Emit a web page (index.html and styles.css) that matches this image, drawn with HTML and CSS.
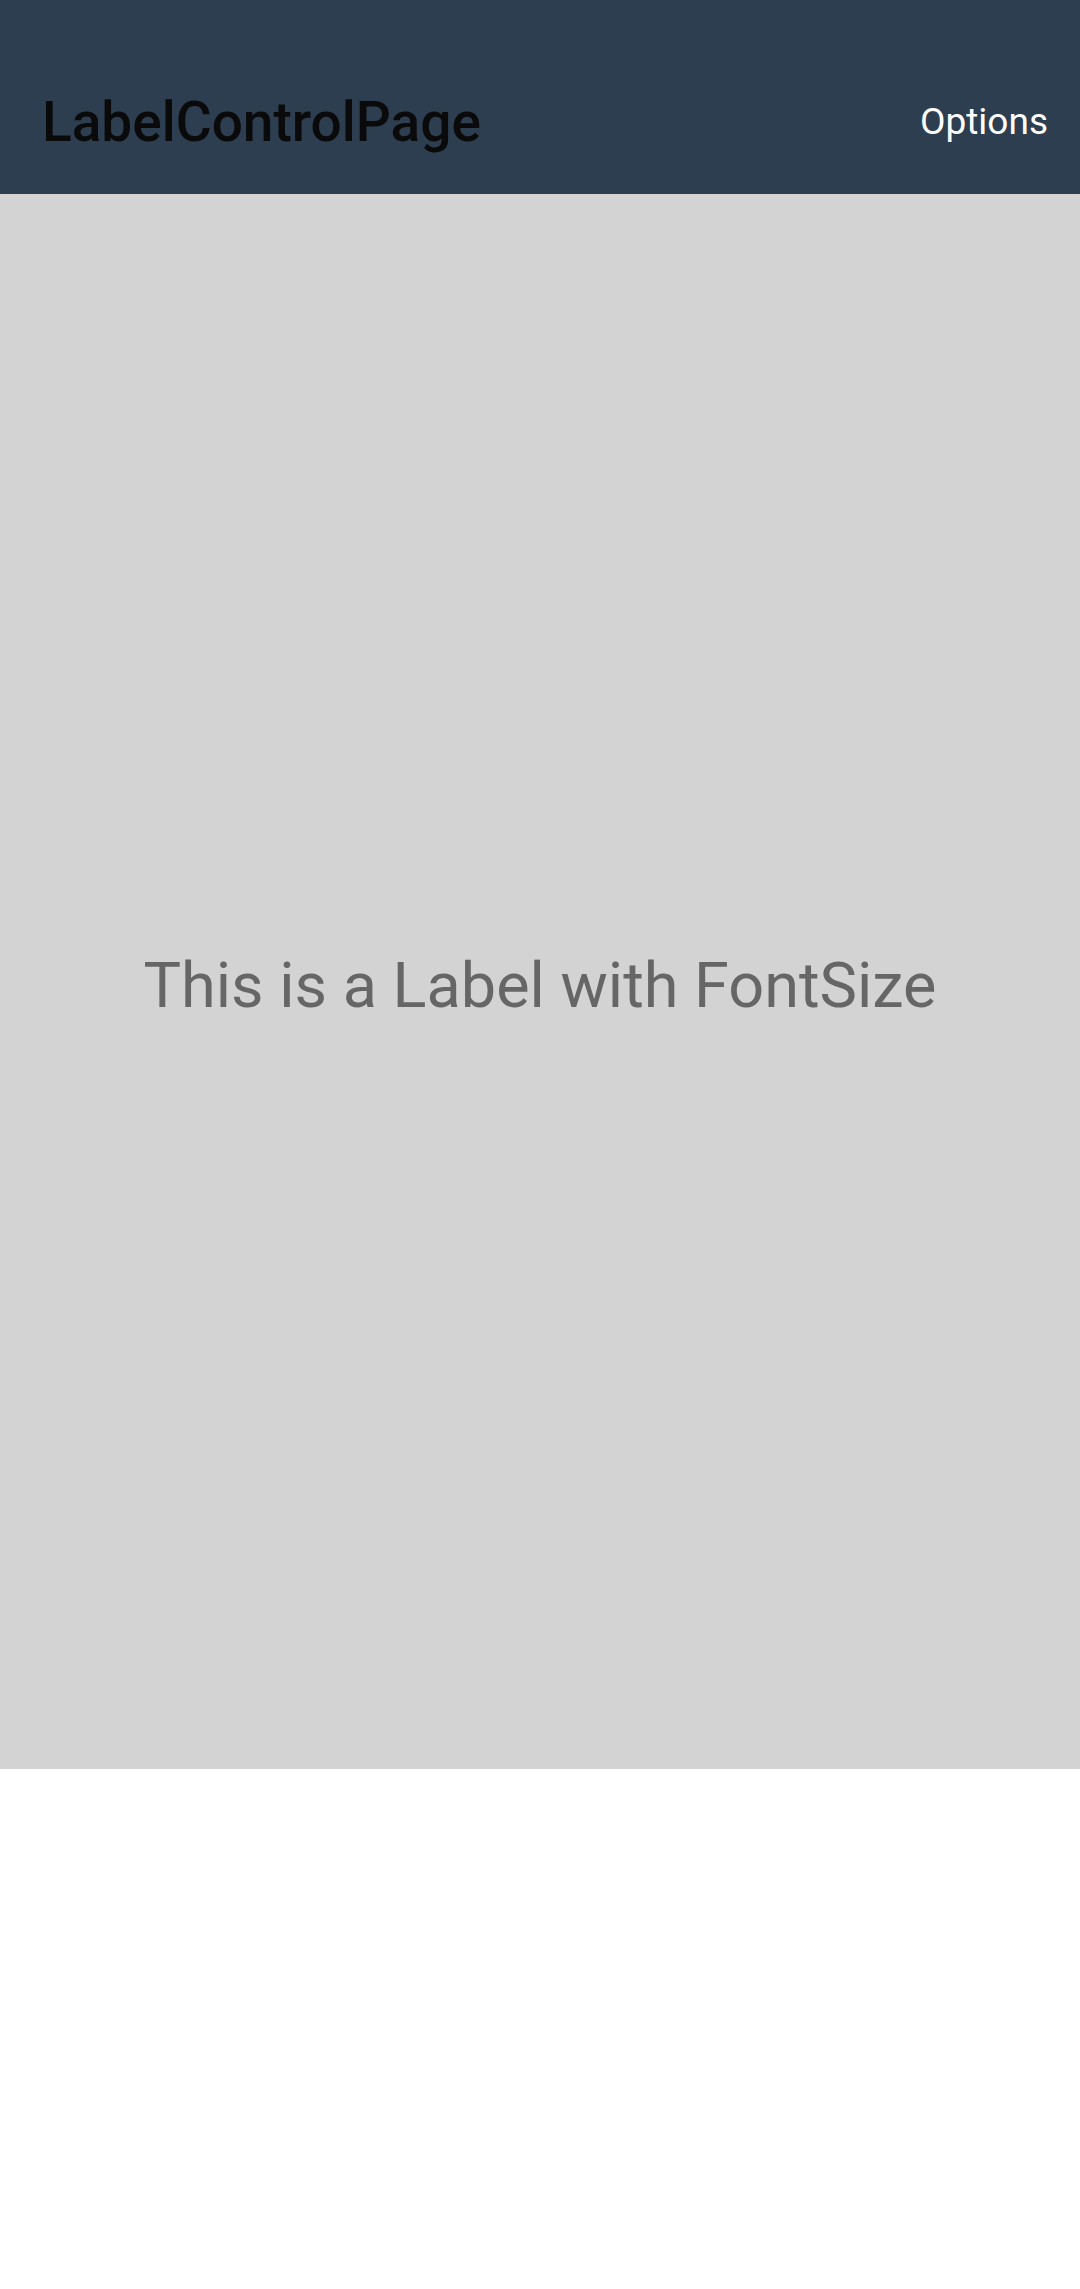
FILE: index.html
```html
<!DOCTYPE html>
<html>
<head>
<meta charset="utf-8">
<link rel="stylesheet" href="styles.css">
</head>
<body>
<div class="app">
  <header class="toolbar">
    <div class="title">LabelControlPage</div>
    <div class="options">Options</div>
  </header>
  <main class="content">
    <div class="label">This is a Label with FontSize</div>
  </main>
</div>
</body>
</html>
```
FILE: styles.css
```css
html, body {
  margin: 0;
  padding: 0;
  background: #ffffff;
  font-family: Roboto, "Noto Sans", sans-serif;
}
.app {
  width: 1080px;
  height: 2289px;
  display: flex;
  flex-direction: column;
}
.toolbar {
  height: 194px;
  background: #2d3e50;
  display: flex;
  align-items: flex-end;
  justify-content: space-between;
  padding: 0 32px 40px 42px;
  box-sizing: border-box;
}
.title {
  font-size: 55px;
  font-weight: 500;
  color: #0a0a0a;
  line-height: 64px;
}
.options {
  font-size: 37px;
  font-weight: 400;
  color: #ffffff;
  line-height: 48px;
  padding-bottom: 8px;
}
.content {
  height: 1575px;
  background: #d3d3d3;
  display: flex;
  align-items: center;
  justify-content: center;
  padding-top: 8px;
  box-sizing: border-box;
}
.label {
  font-size: 63px;
  color: #666666;
}
```
